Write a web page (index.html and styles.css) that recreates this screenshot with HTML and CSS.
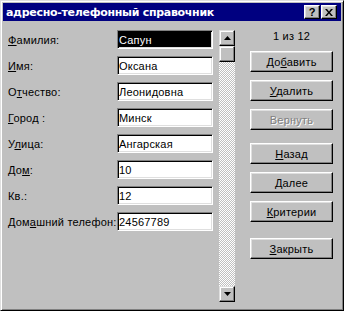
FILE: index.html
```html
<!DOCTYPE html>
<html lang="ru">
<head>
  <meta charset="UTF-8">
  <title>адресно-телефонный справочник</title>
  <link rel="stylesheet" href="styles.css">
</head>
<body>

  <div class="window">
    <!-- Title bar -->
    <div class="title-bar">
      <span class="title">адресно-телефонный справочник</span>
      <div class="title-buttons">
        <button class="title-btn">?</button>
        <button class="title-btn">
          <svg width="8" height="7" viewBox="0 0 8 7"><path d="M0 0h2l2 2.5L6 0h2L5 3.5 8 7H6L4 4.5 2 7H0l3-3.5z" fill="#000"/></svg>
        </button>
      </div>
    </div>

    <div class="form">
      <!-- Fields -->
      <div class="fields">
        <label><u>Ф</u>амилия:</label>
        <input type="text" class="selected" value="Сапун" readonly>
        <label><u>И</u>мя:</label>
        <input type="text" value="Оксана" readonly>
        <label>О<u>т</u>чество:</label>
        <input type="text" value="Леонидовна" readonly>
        <label><u>Г</u>ород :</label>
        <input type="text" value="Минск" readonly>
        <label>У<u>л</u>ица:</label>
        <input type="text" value="Ангарская" readonly>
        <label>До<u>м</u>:</label>
        <input type="text" value="10" readonly>
        <label>Кв.:</label>
        <input type="text" value="12" readonly>
        <label>Дом<u>а</u>шний телефон:</label>
        <input type="text" value="24567789" readonly>
      </div>

      <!-- Scrollbar -->
      <div class="scrollbar">
        <div class="sb-btn">
          <svg width="7" height="4" viewBox="0 0 7 4"><path d="M3.5 0L7 4H0z" fill="#000"/></svg>
        </div>
        <div class="sb-thumb"></div>
        <div class="sb-track"></div>
        <div class="sb-btn">
          <svg width="7" height="4" viewBox="0 0 7 4"><path d="M0 0h7L3.5 4z" fill="#000"/></svg>
        </div>
      </div>

      <!-- Buttons -->
      <div class="actions">
        <div class="counter">1 из 12</div>
        <button class="btn">До<u>б</u>авить</button>
        <button class="btn"><u>У</u>далить</button>
        <button class="btn disabled">Вернуть</button>
        <button class="btn group"><u>Н</u>азад</button>
        <button class="btn"><u>Д</u>алее</button>
        <button class="btn"><u>К</u>ритерии</button>
        <button class="btn group-last"><u>З</u>акрыть</button>
      </div>
    </div>
  </div>

</body>
</html>
```

FILE: styles.css
```css
body {
  margin: 0;
  padding: 0;
  font-family: "Liberation Sans", Arial, sans-serif;
  font-size: 11px;
  letter-spacing: 0.2px;
  background: #c0c0c0;
}
.window {
  width: 344px;
  height: 311px;
  box-sizing: border-box;
  background: #c0c0c0;
  border: 1px solid;
  border-color: #dfdfdf #000 #000 #dfdfdf;
  box-shadow: inset 1px 1px #fff, inset -1px -1px #808080;
  padding: 2px;
}
.title-bar {
  height: 18px;
  background: #000080;
  display: flex;
  align-items: center;
  justify-content: space-between;
  padding: 0 4px 0 3px;
}
.title {
  color: #fff;
  font-family: "DejaVu Sans", Verdana, sans-serif;
  font-weight: bold;
  font-size: 11px;
  letter-spacing: -0.3px;
}
.title-buttons {
  display: flex;
  gap: 1px;
}
.title-btn {
  width: 16px;
  height: 14px;
  padding: 0;
  background: #c0c0c0;
  border: 1px solid;
  border-color: #fff #000 #000 #fff;
  box-shadow: inset -1px -1px #808080, inset 1px 1px #dfdfdf;
  font-family: "Liberation Sans", Arial, sans-serif;
  font-size: 11px;
  font-weight: bold;
  line-height: 10px;
  display: flex;
  align-items: center;
  justify-content: center;
}
.form {
  display: flex;
  padding: 9px 0 0 5px;
}
.fields {
  display: grid;
  grid-template-columns: 109px 96px;
  grid-auto-rows: 19px;
  row-gap: 7px;
  align-items: center;
  align-content: start;
}
.fields label {
  color: #000;
  white-space: nowrap;
}
.fields input {
  height: 19px;
  width: 96px;
  box-sizing: border-box;
  margin: 0;
  padding: 0 1px;
  border: 1px solid;
  border-color: #808080 #fff #fff #808080;
  box-shadow: inset 1px 1px #000, inset -1px -1px #dfdfdf;
  background: #fff;
  color: #000;
  font-family: "Liberation Sans", Arial, sans-serif;
  font-size: 11px;
  letter-spacing: 0.2px;
  outline: none;
}
.fields input.selected {
  background: #000;
  color: #fff;
}
.scrollbar {
  width: 16px;
  height: 272px;
  margin-left: 6px;
  display: flex;
  flex-direction: column;
}
.sb-btn,
.sb-thumb {
  height: 16px;
  box-sizing: border-box;
  background: #c0c0c0;
  border: 1px solid;
  border-color: #dfdfdf #000 #000 #dfdfdf;
  box-shadow: inset -1px -1px #808080, inset 1px 1px #fff;
  display: flex;
  align-items: center;
  justify-content: center;
}
.sb-track {
  flex: 1;
  background: repeating-conic-gradient(#fff 0 25%, #c0c0c0 0 50%) 0 0 / 2px 2px;
}
.actions {
  width: 83px;
  margin-left: 15px;
  display: flex;
  flex-direction: column;
}
.counter {
  height: 13px;
  line-height: 13px;
  text-align: center;
  margin-bottom: 8px;
}
.btn {
  height: 21px;
  width: 83px;
  margin: 0 0 8px 0;
  padding: 0;
  background: #c0c0c0;
  border: 1px solid;
  border-color: #fff #000 #000 #fff;
  box-shadow: inset -1px -1px #808080, inset 1px 1px #dfdfdf;
  font-family: "Liberation Sans", Arial, sans-serif;
  font-size: 11px;
  letter-spacing: 0.2px;
  color: #000;
}
.btn.disabled {
  color: #808080;
  text-shadow: 1px 1px #fff;
}
.btn.group {
  margin-top: 5px;
}
.btn.group-last {
  margin-top: 8px;
}
```
